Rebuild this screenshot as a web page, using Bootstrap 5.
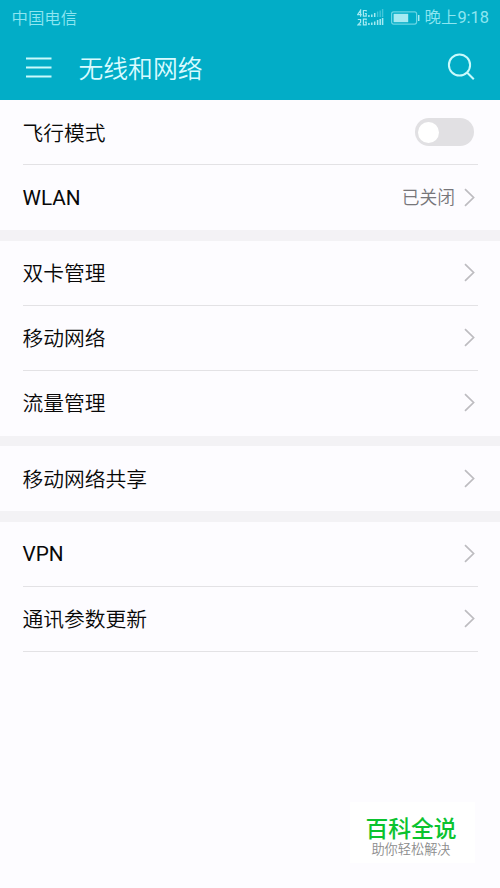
<!DOCTYPE html>
<html lang="zh-CN">
<head>
<meta charset="utf-8">
<meta name="viewport" content="width=device-width, initial-scale=1">
<title>无线和网络</title>
<link href="https://cdn.jsdelivr.net/npm/bootstrap@5.3.0/dist/css/bootstrap.min.css" rel="stylesheet">
<style>
body{font-family:Roboto,"Noto Sans CJK SC",sans-serif;background:#fdfcff;height:888px;overflow:hidden;color:#111}
svg{display:block;flex:none}
.topbar{background:#02adc7;height:100px;color:#d9fbff}
.statusbar{height:35px;padding:0 11px 0 11.5px;font-size:16.4px;line-height:35px;color:#8ee6f1;font-weight:350}
.statusbar .carrier{padding-top:1px}
.clock b{font-weight:400}
.signal{margin-right:7px}
.battery{margin-right:5px}
.titlebar{height:65px;padding:0 25px 0 26px}
.titlebar h1{font-size:24.8px;line-height:65px;font-weight:350;margin-left:26.5px;padding-top:3px}
.search{margin-bottom:1px}
.groups{gap:10.5px;background:#f3f2f5}
.group{background:#fdfcff;padding:0 22px 0 22.5px}
.entry{height:65px;font-size:20.75px;line-height:62px;padding-bottom:1px;font-weight:350;color:#080808}
.entry label,.entry .zh{padding-top:3px}
.latin{font-weight:400;padding-top:1px}
.entry:not(:last-child),.ruled{border-bottom:1px solid #e3e2e5;padding-bottom:0}
.state{font-size:17.8px;color:#77767a;margin-right:9px;padding-top:2px}
.chevron{margin-right:3px}
.form-switch .airplane{width:59px;height:28px;margin:0 4px 0 0;border:0;background-color:#e1e0e3;background-image:none;position:relative}
.airplane::before{content:"";position:absolute;left:2.5px;top:3.5px;width:21px;height:21px;border-radius:50%;background:#fff}
.promo{width:125px;height:61px;right:25px;bottom:25px;background:#fff;padding-right:3px}
.promo-name{font-size:22.8px;line-height:25px;padding-top:15px;font-weight:500;color:#0bc32f}
.promo-sub{font-size:13.2px;line-height:16px;color:#8c8c8c;font-weight:350}
</style>
<script src="https://cdn.jsdelivr.net/npm/bootstrap@5.3.0/dist/js/bootstrap.bundle.min.js"></script>
</head>
<body>
<svg class="d-none"><symbol id="chev" viewBox="0 0 11 19"><path d="M1 1.2 9.6 9.5 1 17.8" fill="none" stroke="#bdbcc0" stroke-width="1.7"/></symbol></svg>
<header class="topbar">
  <div class="statusbar d-flex align-items-center">
    <span class="carrier me-auto">中国电信</span>
    <svg class="signal" width="27" height="18" viewBox="0 0 27 18" fill="none" stroke="#a5eaf2">
      <path d="M3.6 7.8V1.2L.7 5.6H4.8M9.2 2.6V1.5H6.4V7.1H9.2V4.5H7.8M.8 10.5H3.6V13.2L.9 15.9H4.2M9.2 11.2V10.2H6.4V15.9H9.2V13.2H7.8" stroke-width="1.2"/>
      <path d="M11.9 6V8M14.8 5.5V8M17.7 4V8M11.9 14V16M14.8 13.5V16M17.7 12.5V16M20.6 11V16M25.6 9V16M23.2 10V16" stroke-width="1.5"/>
      <path d="M20.6 2.5V8M23.2 1.5V8M25.6 0V8" stroke-width="1.4" opacity=".4"/>
    </svg>
    <svg class="battery" width="29" height="14" viewBox="0 0 29 14">
      <rect x=".6" y=".9" width="25" height="12.2" rx="2" fill="none" stroke="#69d5e4" stroke-width="1.2"/>
      <rect x="2.6" y="2.8" width="14.6" height="8.4" fill="#a5eaf2"/>
      <path d="M27.7 4V10" stroke="#a5eaf2" stroke-width="1.5"/>
    </svg>
    <span class="clock">晚上<b>9:18</b></span>
  </div>
  <div class="titlebar d-flex align-items-center">
    <svg width="26" height="22" viewBox="0 0 26 22" stroke="#c9fafc" stroke-width="2"><path d="M0 1.5H25.5M0 10.5H25.5M0 19.5H25.5"/></svg>
    <h1 class="mb-0 me-auto">无线和网络</h1>
    <svg class="search" width="28" height="28" viewBox="0 0 28 28" fill="none" stroke="#c9fafc" stroke-width="2"><circle cx="12.5" cy="12" r="10.6"/><path d="M20 19.5 26.8 26.3"/></svg>
  </div>
</header>
<main class="groups d-flex flex-column">
  <section class="group">
    <div class="entry d-flex align-items-center justify-content-between"><label for="air">飞行模式</label>
      <div class="form-switch p-0 d-flex"><input class="form-check-input airplane" type="checkbox" role="switch" id="air"></div></div>
    <div class="entry d-flex align-items-center"><span class="latin me-auto">WLAN</span><span class="state">已关闭</span><svg class="chevron" width="11" height="19"><use href="#chev"/></svg></div>
  </section>
  <section class="group">
    <div class="entry d-flex align-items-center justify-content-between"><span class="zh">双卡管理</span><svg class="chevron" width="11" height="19"><use href="#chev"/></svg></div>
    <div class="entry d-flex align-items-center justify-content-between"><span class="zh">移动网络</span><svg class="chevron" width="11" height="19"><use href="#chev"/></svg></div>
    <div class="entry d-flex align-items-center justify-content-between"><span class="zh">流量管理</span><svg class="chevron" width="11" height="19"><use href="#chev"/></svg></div>
  </section>
  <section class="group">
    <div class="entry d-flex align-items-center justify-content-between"><span class="zh">移动网络共享</span><svg class="chevron" width="11" height="19"><use href="#chev"/></svg></div>
  </section>
  <section class="group">
    <div class="entry d-flex align-items-center justify-content-between"><span class="latin">VPN</span><svg class="chevron" width="11" height="19"><use href="#chev"/></svg></div>
    <div class="entry ruled d-flex align-items-center justify-content-between"><span class="zh">通讯参数更新</span><svg class="chevron" width="11" height="19"><use href="#chev"/></svg></div>
  </section>
</main>
<aside class="promo position-fixed text-center">
  <div class="promo-name">百科全说</div>
  <div class="promo-sub">助你轻松解决</div>
</aside>
</body>
</html>
